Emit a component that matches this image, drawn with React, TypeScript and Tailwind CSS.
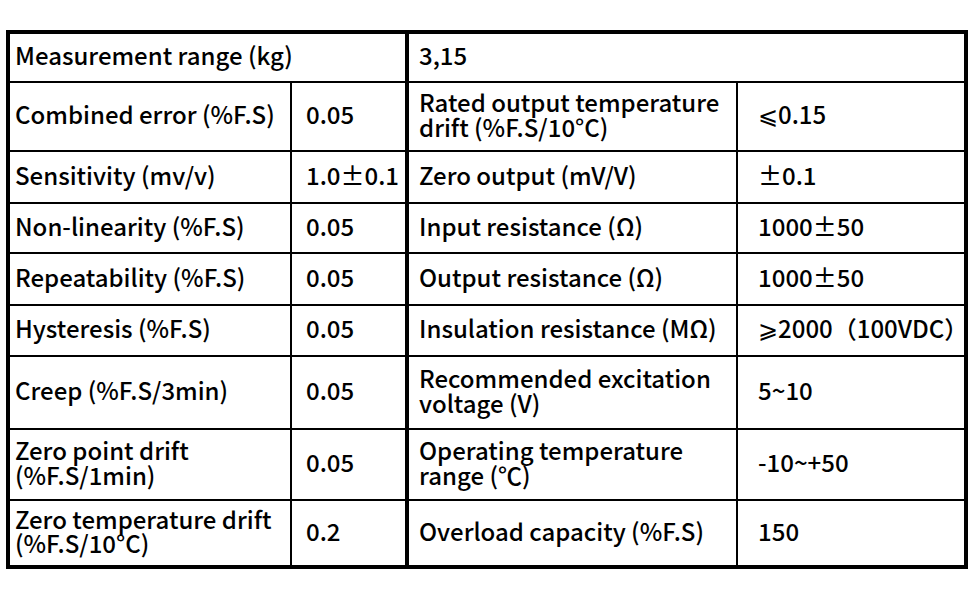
const rows: { h: string; a: string; b: string; c: string; d: string }[] = [
  { h: "h-[69px]", a: "Combined error (%F.S)", b: "0.05", c: "Rated output temperature\ndrift (%F.S/10°C)", d: "⩽0.15" },
  { h: "h-[52px]", a: "Sensitivity (mv/v)", b: "1.0±0.1", c: "Zero output (mV/V)", d: "±0.1" },
  { h: "h-[50px]", a: "Non-linearity (%F.S)", b: "0.05", c: "Input resistance (Ω)", d: "1000±50" },
  { h: "h-[52px]", a: "Repeatability (%F.S)", b: "0.05", c: "Output resistance (Ω)", d: "1000±50" },
  { h: "h-[51px]", a: "Hysteresis (%F.S)", b: "0.05", c: "Insulation resistance (MΩ)", d: "⩾2000（100VDC）" },
  { h: "h-[73px]", a: "Creep (%F.S/3min)", b: "0.05", c: "Recommended excitation\nvoltage (V)", d: "5~10" },
  { h: "h-[71px]", a: "Zero point drift\n(%F.S/1min)", b: "0.05", c: "Operating temperature\nrange (℃)", d: "-10~+50" },
  { h: "h-[67px]", a: "Zero temperature drift\n(%F.S/10°C)", b: "0.2", c: "Overload capacity (%F.S)", d: "150" },
];

export default function App() {
  return (
    <div className="w-[970px] h-[600px] bg-white pt-[30px] pl-[6px] font-['Noto_Sans_CJK_SC',sans-serif] font-medium text-[24px] leading-[1.02] text-black">
      <table className="table-fixed border-collapse border-4 border-black w-[958px]">
        <colgroup>
          <col className="w-[283px]" />
          <col className="w-[116px]" />
          <col className="w-[330px]" />
          <col className="w-[229px]" />
        </colgroup>
        <tbody>
          <tr className="h-[50px]">
            <td colSpan={2} className="border-2 border-black pl-[5px] pb-[5px]">Measurement range (kg)</td>
            <td colSpan={2} className="border-2 border-l-4 border-black pl-[10px] pb-[5px]">3,15</td>
          </tr>
          {rows.map((r, i) => (
            <tr key={i} className={r.h}>
              <td className="border-2 border-black pl-[5px] pb-[4px] whitespace-pre-line">{r.a}</td>
              <td className="border-2 border-black pl-[14px] pb-[4px] whitespace-nowrap">{r.b}</td>
              <td className="border-2 border-l-4 border-black pl-[10px] pb-[4px] whitespace-pre-line">{r.c}</td>
              <td className="border-2 border-black pl-[20px] pb-[4px] whitespace-nowrap">{r.d}</td>
            </tr>
          ))}
        </tbody>
      </table>
    </div>
  );
}
